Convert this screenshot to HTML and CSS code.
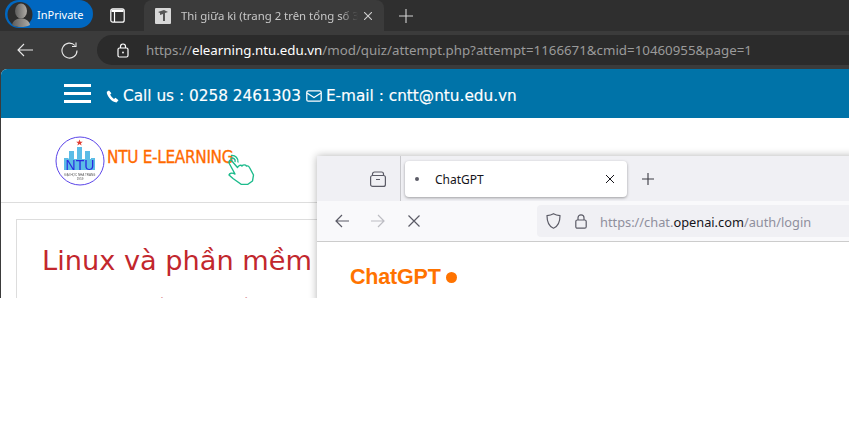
FILE: index.html
```html
<!DOCTYPE html>
<html lang="en">
<head>
    <meta charset="UTF-8">
    <meta name="viewport" content="width=device-width, initial-scale=1.0">
    <title>Thi giữa kì</title>
    <link rel="stylesheet" href="styles.css">
</head>
<body>
    <div class="desktop">
        <!-- Edge window -->
        <div class="edge">
            <div class="edge-tabs">
                <div class="inprivate">
                    <svg class="avatar" width="35" height="27" viewBox="0 0 35 27">
                        <defs>
                            <linearGradient id="av" x1="0" x2="1" y1="0" y2="0">
                                <stop offset="0" stop-color="#5c5c5c"/>
                                <stop offset="1" stop-color="#b0aca6"/>
                            </linearGradient>
                        </defs>
                        <circle cx="14" cy="13.5" r="12.5" fill="#2e2e2e"/>
                        <ellipse cx="15" cy="10" rx="6" ry="7.5" fill="url(#av)"/>
                        <path d="M6 24c1-5 5-6.500 9-6.500s8 1.500 9 6.500c-3 1.500-6 2-9 2s-6-.5-9-2z" fill="url(#av)"/>
                    </svg>
                    <span>InPrivate</span>
                </div>
                <svg class="tabs-icon" width="15" height="15" viewBox="0 0 15 15" fill="none" stroke="#fff" stroke-width="1.200">
                    <rect x=".8" y=".8" width="13.400" height="13.400" rx="2"/>
                    <path d="M4.500 4v10"/>
                    <path d="M1.500 1.500h12V4h-12z" fill="#fff" stroke="none"/>
                </svg>
                <div class="edge-tab">
                    <svg class="favicon" width="16" height="16" viewBox="0 0 16 16">
                        <rect width="16" height="16" rx="1" fill="#d8d8d8"/>
                        <path d="M3 4l6-2 4 2-3 1v8H8V6L5 7V5z" fill="#555"/>
                    </svg>
                    <span class="edge-title">Thi giữa kì (trang 2 trên tổng số 3</span>
                    <svg class="edge-close" width="8" height="8" viewBox="0 0 8 8" stroke="#cfcfcf" stroke-width="1.100"><path d="M0 0l8 8M8 0L0 8"/></svg>
                </div>
                <svg class="new-tab" width="14" height="14" viewBox="0 0 14 14" stroke="#d4d4d4" stroke-width="1.100"><path d="M7 0v14M0 7h14"/></svg>
            </div>
            <div class="edge-bar">
                <svg class="nav-icon" width="16" height="14" viewBox="0 0 16 14" fill="none" stroke="#e8e8e8" stroke-width="1.100"><path d="M16 7H1M7 1L1 7l6 6"/></svg>
                <svg class="nav-icon reload" width="17" height="17" viewBox="0 0 17 17" fill="none" stroke="#e8e8e8" stroke-width="1.100"><path d="M14 3.500A7.500 7.500 0 1 0 16 8.500"/><path d="M15 .5v4h-4"/></svg>
                <div class="edge-url">
                    <svg class="lock" width="12" height="15" viewBox="0 0 12 15" fill="none" stroke="#fff" stroke-width="1.200"><rect x="1" y="5" width="10" height="9" rx="1.500"/><path d="M3.500 5V3.500a2.500 2.500 0 0 1 5 0V5"/><circle cx="6" cy="9.500" r=".9" fill="#fff" stroke="none"/></svg>
                    <span class="url-text">https://<b>elearning.ntu.edu.vn</b>/mod/quiz/attempt.php?attempt=1166671&amp;cmid=10460955&amp;page=1</span>
                </div>
            </div>
            <div class="page">
                <div class="topbar">
                    <div class="burger"><i></i><i></i><i></i></div>
                    <svg class="phone" width="13" height="13" viewBox="0 0 13 13"><path d="M3 .5L.8 1.800C.3 5 5.500 12.500 10.500 12.500l2-2.200-3-2.500-1.500 1.200C6.500 8 4.800 6 4.200 4.500l1.200-1.300z" fill="#fff"/></svg>
                    <span>Call us : 0258 2461303</span>
                    <svg class="mail" width="16" height="12" viewBox="0 0 16 12" fill="none" stroke="#fff" stroke-width="1.300"><rect x=".8" y=".8" width="14.400" height="10.400" rx="1.500"/><path d="M1 3l7 4.500L15 3"/></svg>
                    <span>E-mail : cntt@ntu.edu.vn</span>
                </div>
                <div class="brand">
                    <svg class="logo" width="50" height="50" viewBox="0 0 50 50">
                        <circle cx="25" cy="25" r="24" fill="#fff" stroke="#5b45e8" stroke-width="1"/>
                        <path d="M24.500 3.500l.9 2.300h2.400l-1.900 1.400.7 2.300-2.100-1.400-2.100 1.400.7-2.300-1.900-1.400h2.400z" fill="#e03c31"/>
                        <path d="M9 34V22h4.500v1H14v-8h5v8h3V11h5v12h3v-8h5v8h1v-1h4v12z" fill="#5bbce6"/>
                        <text x="25" y="34" class="logo-ntu">NTU</text>
                        <text x="25" y="39.500" class="logo-sub">ĐẠI HỌC NHA TRANG</text>
                        <text x="25" y="44" class="logo-sub">1959</text>
                    </svg>
                    <span class="brand-name">NTU E-LEARNING</span>
                    <svg class="hand" width="28" height="32" viewBox="0 0 28 32" fill="none" stroke="#1dbb8c" stroke-width="1.400" stroke-linejoin="round">
                        <path d="M4 2.500a6 6 0 0 1 7 7M3.500 5.500a3 3 0 0 1 4.500 3.500"/>
                        <path d="M4 7l6.500 7.500c1-2 3.500-3 4.500-1.500 1-1.500 3.500-1.500 4.500 0 1.500-.5 2.500.5 3 1.500L26.500 22l-1 6-5 3.500h-6L6 25.500 2 22c.5-2 3-2.500 6-1L2 10c0-2 1-3 2-3z"/>
                    </svg>
                </div>
                <div class="card">
                    <h1>Linux và phần mềm</h1>
                    <p class="card-sub">Thi giữa kì (trang 2 trên 3)</p>
                </div>
            </div>
        </div>

        <!-- Firefox window on top -->
        <div class="firefox">
            <div class="ff-tabs">
                <div class="ff-view">
                    <svg width="16" height="16" viewBox="0 0 16 16" fill="none" stroke="#5b5b66" stroke-width="1.200"><rect x=".6" y="4.500" width="14.800" height="10.900" rx="2"/><path d="M2.500 4.500V3a2 2 0 0 1 2-2h7a2 2 0 0 1 2 2v1.500M6 8.500h4"/></svg>
                </div>
                <div class="ff-tab">
                    <i class="ff-dot"></i>
                    <span class="ff-title">ChatGPT</span>
                    <svg width="10" height="10" viewBox="0 0 10 10" stroke="#15141a" stroke-width="1"><path d="M1 1l8 8M9 1l-8 8"/></svg>
                </div>
                <svg class="ff-new" width="12" height="12" viewBox="0 0 12 12" stroke="#3a3a42" stroke-width="1.100"><path d="M6 0v12M0 6h12"/></svg>
            </div>
            <div class="ff-bar">
                <svg width="14" height="14" viewBox="0 0 14 14" fill="none" stroke="#5b5b66" stroke-width="1.200"><path d="M14 7H1M7 1L1 7l6 6"/></svg>
                <svg width="14" height="14" viewBox="0 0 14 14" fill="none" stroke="#bdbdc3" stroke-width="1.200"><path d="M0 7h13M7 1l6 6-6 6"/></svg>
                <svg class="ff-stop" width="12" height="12" viewBox="0 0 12 12" stroke="#5b5b66" stroke-width="1.200"><path d="M.5.500l11 11M11.500.500l-11 11"/></svg>
                <div class="ff-url">
                    <svg width="15" height="16" viewBox="0 0 15 16" fill="none" stroke="#5b5b66" stroke-width="1.200"><path d="M7.500.8c2 1.200 4 1.700 6.500 1.900 0 6-1.500 10.500-6.500 12.500C2.500 13.200 1 8.700 1 2.700 3.500 2.500 5.500 2 7.500.8z"/></svg>
                    <svg width="12" height="15" viewBox="0 0 12 15" fill="none" stroke="#5b5b66" stroke-width="1.200"><rect x=".8" y="6" width="10.400" height="8.200" rx="1.500"/><path d="M3 6V3.800a3 3 0 0 1 6 0V6"/></svg>
                    <span class="ff-url-text">https://chat.<b>openai.com</b>/auth/login</span>
                </div>
            </div>
            <div class="ff-page">
                <span class="chat-logo">ChatGPT</span>
                <i class="chat-dot"></i>
            </div>
        </div>
    </div>
</body>
</html>
```

FILE: styles.css
```css
/* General Styles */
body {
    margin: 0;
    background-color: #fff;
    font-family: 'Noto Sans', 'Open Sans', sans-serif;
}

.desktop {
    position: relative;
    width: 849px;
    height: 298px;
    overflow: hidden;
}

/* Edge window */
.edge {
    height: 298px;
    background-color: #3b3b3b;
}

.edge-tabs {
    display: flex;
    align-items: center;
    height: 31px;
    padding-left: 5px;
    background-color: #2f2f2f;
}

.inprivate {
    display: flex;
    align-items: center;
    width: 88px;
    height: 28px;
    margin-top: -3px;
    border-radius: 14px;
    background-color: #0067c0;
    color: #fff;
    font-size: 11px;
}

.avatar {
    flex-shrink: 0;
    margin-left: 1px;
}

.inprivate span {
    margin-left: -4px;
}

.tabs-icon {
    margin-left: 17px;
}

.edge-tab {
    display: flex;
    align-items: center;
    align-self: flex-end;
    width: 240px;
    height: 31px;
    margin-left: 19px;
    padding: 0 12px 0 11px;
    box-sizing: border-box;
    border-radius: 8px 8px 0 0;
    background-color: #3b3b3b;
    color: #c8c8c8;
    font-size: 11.400px;
}

.favicon,
.edge-close {
    flex-shrink: 0;
}

.edge-title {
    flex: 1;
    margin: 0 6px 0 10px;
    overflow: hidden;
    white-space: nowrap;
    -webkit-mask-image: linear-gradient(to right, #000 90%, transparent);
    mask-image: linear-gradient(to right, #000 90%, transparent);
}

.new-tab {
    margin-left: 15px;
}

.edge-bar {
    display: flex;
    align-items: center;
    height: 38px;
}

.nav-icon {
    margin-left: 17px;
}

.reload {
    margin-left: 28px;
}

.edge-url {
    display: flex;
    flex: 1;
    align-items: center;
    height: 30px;
    margin-left: 19px;
    padding-left: 20px;
    border-radius: 15px 0 0 15px;
    background-color: #2b2b2b;
}

.url-text {
    margin-left: 17px;
    color: #9a9a9a;
    font-size: 13.320px;
    white-space: nowrap;
}

.url-text b {
    color: #fff;
    font-weight: 400;
}

.page {
    height: 229px;
    margin-left: 1px;
    overflow: hidden;
    border-radius: 6px 0 0 0;
    background-color: #fff;
}

.topbar {
    display: flex;
    align-items: center;
    height: 44px;
    padding: 5px 0 0 63px;
    background-color: #0073a8;
    color: #fff;
    font-family: 'DejaVu Sans', Verdana, sans-serif;
    font-size: 15.300px;
    -webkit-text-stroke: .15px #fff;
}

.burger {
    display: flex;
    flex-direction: column;
    gap: 5px;
    width: 27px;
    margin: -5px 15px 0 0;
}

.burger i {
    height: 3px;
    background-color: #fff;
}

.phone {
    margin-right: 4px;
}

.mail {
    margin: 0 4px 0 5px;
}

.brand {
    display: flex;
    align-items: flex-start;
    height: 84px;
    padding-left: 54px;
    border-bottom: 1px solid #ddd;
}

.logo {
    margin-top: 18px;
    filter: blur(.3px);
}

.logo-ntu {
    fill: #2a2ae0;
    font-family: 'Liberation Sans', sans-serif;
    font-size: 14px;
    text-anchor: middle;
}

.logo-sub {
    fill: #555;
    font-family: 'Liberation Sans', sans-serif;
    font-size: 3px;
    text-anchor: middle;
}

.brand-name {
    margin: 29px 0 0 2px;
    color: #ff6a00;
    font-family: 'DejaVu Sans Condensed', 'DejaVu Sans', sans-serif;
    font-size: 17px;
    letter-spacing: -.3px;
    white-space: nowrap;
    -webkit-text-stroke: .3px #ff6a00;
}

.hand {
    margin: 35px 0 0 -6px;
}

.card {
    width: 840px;
    margin: 16px 0 0 15px;
    padding: 23px 25px;
    box-sizing: border-box;
    border: 1px solid #ddd;
}

.card h1 {
    margin: 0;
    color: #c2272d;
    font-family: 'DejaVu Sans', Verdana, sans-serif;
    font-size: 27.200px;
    font-weight: 400;
    line-height: 36px;
    white-space: nowrap;
}

.card-sub {
    margin: 15px 0 0 51px;
    color: #c2272d;
    font-family: 'DejaVu Sans', Verdana, sans-serif;
    font-size: 14px;
    line-height: 20px;
    white-space: nowrap;
}

/* Firefox window */
.firefox {
    position: absolute;
    left: 317px;
    top: 156px;
    width: 540px;
    height: 150px;
    background-color: #fff;
    box-shadow: 0 0 8px rgba(0, 0, 0, .3);
}

.ff-tabs {
    display: flex;
    align-items: center;
    height: 45px;
    background-color: #f0f0f4;
}

.ff-view {
    display: flex;
    align-items: center;
    justify-content: flex-end;
    box-sizing: border-box;
    width: 84px;
    height: 45px;
    padding-right: 14px;
    border-right: 1px solid #c8c8cc;
}

.ff-tab {
    display: flex;
    align-items: center;
    width: 222px;
    height: 36px;
    margin-left: 4px;
    padding: 0 12px 0 10px;
    box-sizing: border-box;
    border-radius: 4px;
    background-color: #fff;
    box-shadow: 0 1px 3px rgba(0, 0, 0, .35);
    color: #15141a;
    font-size: 12px;
}

.ff-dot {
    width: 4px;
    height: 4px;
    border-radius: 50%;
    background-color: #5b5b66;
}

.ff-title {
    flex: 1;
    margin-left: 16px;
    padding-top: 1px;
}

.ff-new {
    margin-left: 15px;
}

.ff-bar {
    display: flex;
    align-items: center;
    gap: 22px;
    height: 40px;
    padding-left: 18px;
    border-bottom: 1px solid #ccc;
    background-color: #f9f9fb;
}

.ff-stop {
    margin-left: 1px;
}

.ff-url {
    display: flex;
    flex: 1;
    align-items: center;
    gap: 14px;
    height: 32px;
    margin-left: 95px;
    padding-left: 9px;
    border-radius: 4px 0 0 4px;
    background-color: #f0f0f4;
}

.ff-url-text {
    margin-left: -1px;
    padding-top: 1px;
    color: #8f8f9d;
    font-size: 12.800px;
}

.ff-url-text b {
    color: #15141a;
    font-weight: 400;
}

.ff-page {
    display: flex;
    align-items: center;
    gap: 5px;
    padding: 23px 0 0 33px;
}

.chat-logo {
    color: #ff7300;
    font-family: 'Liberation Sans', sans-serif;
    font-size: 21.500px;
    font-weight: 700;
    letter-spacing: -.2px;
}

.chat-dot {
    width: 11px;
    height: 11px;
    border-radius: 50%;
    background-color: #ff7300;
}
```
